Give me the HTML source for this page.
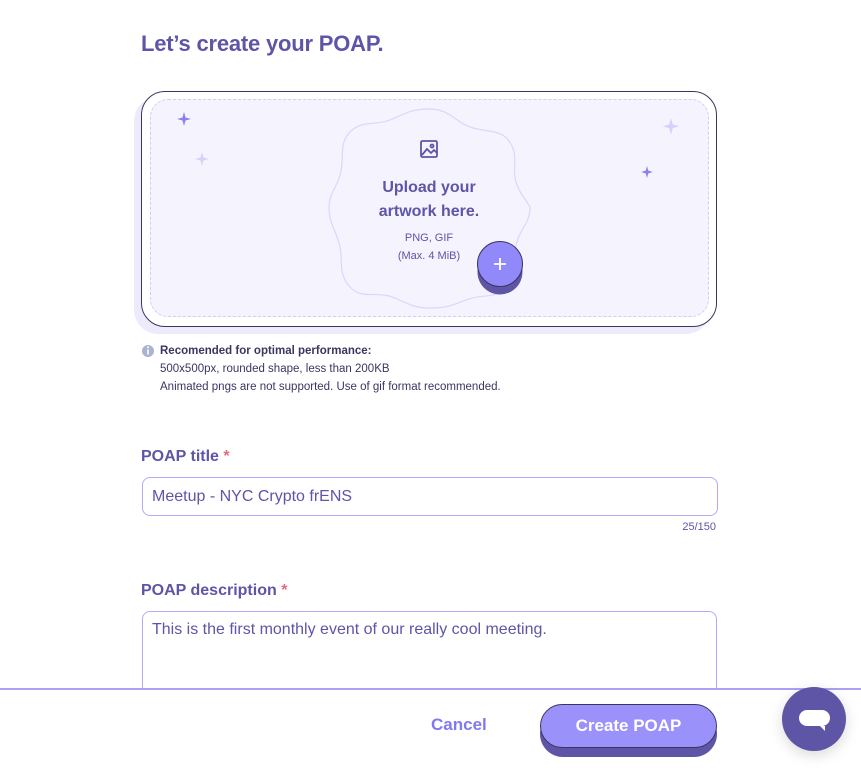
<!DOCTYPE html>
<html><head><meta charset="utf-8"><style>
*{box-sizing:border-box;margin:0;padding:0}
body{width:861px;height:768px;background:#fff;font-family:"Liberation Sans",sans-serif;color:#5e55a6;position:relative;overflow:hidden}
.abs{position:absolute}
h1{position:absolute;left:141px;top:31px;font-size:22px;font-weight:bold;color:#5e55a6;letter-spacing:-0.2px}
.shadow{left:134px;top:97px;width:576px;height:237px;border-radius:24px;background:#edeafc}
.card{left:141px;top:91px;width:576px;height:236px;border-radius:24px;border:1px solid #3b3660;background:#fff}
.inner{left:150px;top:99px;width:559px;height:218px;border-radius:18px;border:1px dashed #d3cdf6;background:#f5f3fe}
.lbl{font-size:16px;font-weight:bold;color:#5e55a6}
.lbl span{color:#e56a7e}
.inp{border:1px solid #b2aaf8;border-radius:8px;background:#fff;font-size:16px;color:#5e55a6;padding:0 9px}
</style></head><body>
<h1>Let’s create your POAP.</h1>
<div class="abs shadow"></div>
<div class="abs card"></div>
<div class="abs inner"></div>
<svg class="abs" style="left:0;top:0" width="861" height="370">
<path d="M429 109 C450 109 455 122 470 127 C487 133 502 128 511 144 C519 158 511 170 517 185 C522 198 530 204 530 208 C530 224 518 231 516 246 C514 262 520 275 508 287 C496 299 483 294 469 299 C454 304 450 308 429 308 C410 308 403 300 389 296 C374 292 361 299 350 287 C338 274 343 262 340 247 C337 232 329 224 329 208 C329 192 339 185 341 171 C344 155 339 142 351 131 C363 120 375 126 390 120 C405 114 410 109 429 109 Z" fill="none" stroke="#dcd6fb" stroke-width="1.2"/>
<g fill="#8a80f0"><path d="M184 112 l1.5 5.5 5.5 1.5 -5.5 1.5 -1.5 5.5 -1.5 -5.5 -5.5 -1.5 5.5 -1.5z"/><path d="M647 166 l1.2 4.5 4.5 1.5 -4.5 1.5 -1.2 4.5 -1.2 -4.5 -4.5 -1.5 4.5 -1.5z"/></g>
<g fill="#d6d1f8"><path d="M202 152 l1.5 5.5 5.5 1.5 -5.5 1.5 -1.5 5.5 -1.5 -5.5 -5.5 -1.5 5.5 -1.5z"/><path d="M671 118 l1.8 6.5 6.5 1.8 -6.5 1.8 -1.8 6.5 -1.8 -6.5 -6.5 -1.8 6.5 -1.8z"/></g>
<g fill="none" stroke="#5e55a6" stroke-width="1.8"><rect x="421" y="141" width="16" height="16" rx="1.5"/><path d="M422 155 l5 -6 4 4 3 -3 3 3"/><circle cx="432" cy="146" r="1.5"/></g>
<circle cx="500" cy="272" r="22.5" fill="#5e55a6"/>
<circle cx="500" cy="264" r="22.5" fill="#9189f9" stroke="#3b3660" stroke-width="1"/>
<path d="M500 258v12M494 264h12" stroke="#fff" stroke-width="1.8"/>
<circle cx="148" cy="351" r="6" fill="#a8b4d0"/><path d="M148 349.5v5" stroke="#fff" stroke-width="1.6"/><circle cx="148" cy="347.2" r="1" fill="#fff"/>
</svg>
<div class="abs" style="left:329px;top:176px;width:200px;text-align:center;font-size:16px;font-weight:bold;line-height:24px;color:#5e55a6">Upload your<br>artwork here.</div>
<div class="abs" style="left:329px;top:229px;width:200px;text-align:center;font-size:11px;line-height:18px;color:#5e55a6">PNG, GIF<br>(Max. 4 MiB)</div>
<div class="abs" style="left:160px;top:342px;font-size:11.5px;line-height:18px;color:#3b3660"><b>Recomended for optimal performance:</b><br>500x500px, rounded shape, less than 200KB<br>Animated pngs are not supported. Use of gif format recommended.</div>
<div class="abs lbl" style="left:141px;top:448px">POAP title <span>*</span></div>
<div class="abs inp" style="left:142px;top:477px;width:576px;height:39px;line-height:37px">Meetup - NYC Crypto frENS</div>
<div class="abs" style="left:600px;top:521px;width:116px;text-align:right;font-size:11px;color:#5e55a6">25/150</div>
<div class="abs lbl" style="left:141px;top:582px">POAP description <span>*</span></div>
<div class="abs inp" style="left:142px;top:611px;width:575px;height:100px;padding-top:8px;line-height:20px">This is the first monthly event of our really cool meeting.</div>
<div class="abs" style="left:0;top:688px;width:861px;height:80px;background:#fff;border-top:2px solid #aaa1f6"></div>
<div class="abs" style="left:431px;top:715px;font-size:17px;font-weight:bold;color:#8179ef">Cancel</div>
<div class="abs" style="left:540px;top:711px;width:177px;height:46px;border-radius:23px;background:#5e55a6"></div>
<div class="abs" style="left:540px;top:704px;width:177px;height:44px;border-radius:22px;background:#9a91fb;border:1px solid #3b3660;color:#fff;font-size:17px;font-weight:bold;text-align:center;line-height:42px">Create POAP</div>
<div class="abs" style="left:782px;top:687px;width:64px;height:64px;border-radius:50%;background:#5e55a6;box-shadow:0 4px 14px rgba(0,0,0,0.15)"></div>
<svg class="abs" style="left:782px;top:687px" width="64" height="64"><rect x="17" y="23" width="31" height="16" rx="8" fill="#fff"/><path d="M38 39h5v5z" fill="#fff"/></svg>
</body></html>
